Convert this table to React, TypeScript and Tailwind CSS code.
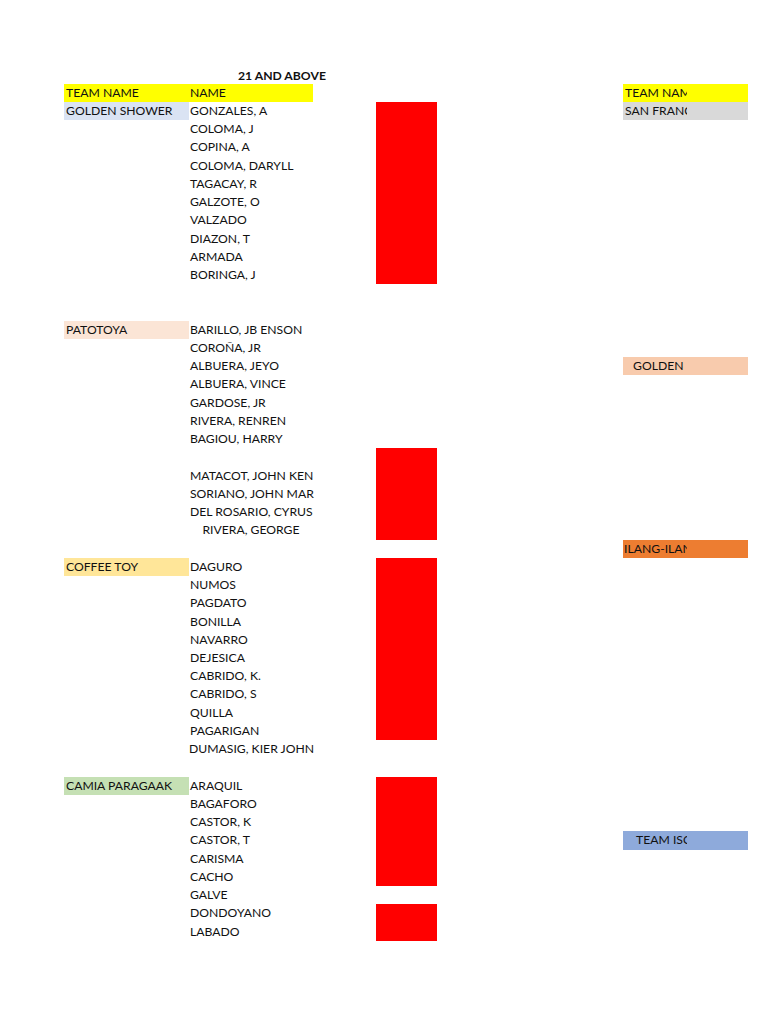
import React from "react";

type Row = {
  team?: string;
  teamBg?: string;
  name?: string;
  center?: boolean;
  red?: boolean;
  right?: string;
  rightBg?: string;
  rightPad?: string;
};

const rows: Row[] = [];
for (let i = 0; i < 48; i++) rows.push({});

const names: [number, string, boolean?][] = [
  [2, "GONZALES, A"], [3, "COLOMA, J"], [4, "COPINA, A"], [5, "COLOMA, DARYLL"],
  [6, "TAGACAY, R"], [7, "GALZOTE, O"], [8, "VALZADO"], [9, "DIAZON, T"],
  [10, "ARMADA"], [11, "BORINGA, J"],
  [14, "BARILLO, JB ENSON"], [15, "COROÑA, JR"], [16, "ALBUERA, JEYO"], [17, "ALBUERA, VINCE"],
  [18, "GARDOSE, JR"], [19, "RIVERA, RENREN"], [20, "BAGIOU, HARRY"],
  [22, "MATACOT, JOHN KEN"], [23, "SORIANO, JOHN MAR"], [24, "DEL ROSARIO, CYRUS"],
  [25, "RIVERA, GEORGE", true],
  [27, "DAGURO"], [28, "NUMOS"], [29, "PAGDATO"], [30, "BONILLA"], [31, "NAVARRO"],
  [32, "DEJESICA"], [33, "CABRIDO, K."], [34, "CABRIDO, S"], [35, "QUILLA"],
  [36, "PAGARIGAN"], [37, "DUMASIG, KIER JOHN", true],
  [39, "ARAQUIL"], [40, "BAGAFORO"], [41, "CASTOR, K"], [42, "CASTOR, T"],
  [43, "CARISMA"], [44, "CACHO"], [45, "GALVE"], [46, "DONDOYANO"], [47, "LABADO"],
];
names.forEach(([i, n, c]) => { rows[i].name = n; rows[i].center = c; });

rows[2].team = "GOLDEN SHOWER"; rows[2].teamBg = "bg-[#dae3f3]";
rows[14].team = "PATOTOYA"; rows[14].teamBg = "bg-[#fbe5d6]";
rows[27].team = "COFFEE TOY"; rows[27].teamBg = "bg-[#ffe699]";
rows[39].team = "CAMIA PARAGAAK"; rows[39].teamBg = "bg-[#c5e0b4]";

const redRows = [[2, 11], [21, 25], [27, 36], [39, 44], [46, 47]];
redRows.forEach(([a, b]) => { for (let i = a; i <= b; i++) rows[i].red = true; });

rows[1].right = "TEAM NAME"; rows[1].rightBg = "bg-[#ffff00]"; rows[1].rightPad = "pl-[2px]";
rows[2].right = "SAN FRANCISCO"; rows[2].rightBg = "bg-[#d9d9d9]"; rows[2].rightPad = "pl-[2px]";
rows[16].right = "GOLDEN"; rows[16].rightBg = "bg-[#f8cbad]"; rows[16].rightPad = "pl-[10px]";
rows[26].right = "ILANG-ILANG"; rows[26].rightBg = "bg-[#ed7d31]"; rows[26].rightPad = "pl-[1px]";
rows[42].right = "TEAM ISOG"; rows[42].rightBg = "bg-[#8eaadb]"; rows[42].rightPad = "pl-[13px]";

export default function App() {
  return (
    <div className="w-[768px] h-[1024px] bg-white overflow-hidden text-[#111] text-[12.2px] pt-[65.5px] pl-[64px]" style={{ fontFamily: "Lato, 'Open Sans', sans-serif" }}>
      {rows.map((r, i) => (
        <div key={i} className="flex h-[18.24px] leading-[18px]">
          {i === 0 ? (
            <>
              <div className="w-[174px]" />
              <div className="w-[100px] font-bold whitespace-nowrap pt-[1px]">21 AND ABOVE</div>
            </>
          ) : i === 1 ? (
            <div className="w-[249px] bg-[#ffff00] flex">
              <div className="w-[125px] pl-[2px]">TEAM NAME</div>
              <div className="w-[124px] pl-[1px]">NAME</div>
            </div>
          ) : (
            <>
              <div className={`w-[125px] pl-[2px] whitespace-nowrap ${r.teamBg ?? ""}`}>{r.team}</div>
              <div className={`w-[124px] whitespace-nowrap ${r.center ? "text-center" : "pl-[1px]"}`}>{r.name}</div>
            </>
          )}
          {i >= 1 ? <div className="w-[63px]" /> : null}
          {i >= 1 ? <div className={`w-[61px] ${r.red ? "bg-[#ff0000]" : ""}`} /> : null}
          {i >= 1 ? <div className="w-[186px]" /> : null}
          {i >= 1 ? (
            <div className={`w-[125px] ${r.rightBg ?? ""}`}>
              {r.right ? (
                <div className={`w-[64px] overflow-hidden whitespace-nowrap ${r.rightPad ?? ""}`}>{r.right}</div>
              ) : null}
            </div>
          ) : null}
        </div>
      ))}
    </div>
  );
}
